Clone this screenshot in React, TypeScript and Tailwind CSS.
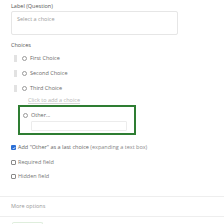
import React from 'react';

const Radio: React.FC = () => (
  <span className="w-[5px] h-[5px] rounded-full border-[0.5px] border-[#9a9a9a] bg-white shrink-0" />
);

const Box: React.FC<{ checked?: boolean }> = ({ checked }) =>
  checked ? (
    <span className="w-[5px] h-[5px] rounded-[1px] bg-[#2b6fd6] flex items-center justify-center shrink-0">
      <svg viewBox="0 0 10 10" className="w-[4px] h-[4px]">
        <path d="M2 5.2 L4.2 7.4 L8 2.8" stroke="white" strokeWidth="1.8" fill="none" />
      </svg>
    </span>
  ) : (
    <span className="w-[5px] h-[5px] rounded-[1px] border-[0.5px] border-[#8a8a8a] bg-white shrink-0" />
  );

const choices = ['First Choice', 'Second Choice', 'Third Choice'];

export default function App() {
  return (
    <div
      className="w-[224px] h-[224px] overflow-hidden bg-white text-[5.5px] text-[#555]"
      style={{ fontFamily: '"Open Sans", "Liberation Sans", sans-serif' }}
    >
      <div className="px-[11px] pt-[3px]">
        <div className="h-[6px] leading-[6px] text-[#555]">Label (Question)</div>
        <div className="mt-[2px] w-[167px] h-[24px] rounded-[2px] border border-[#e6e6e6] px-[5px] pt-[3px] text-[#9a9a9a]">
          Select a choice
        </div>

        <div className="mt-[7px] h-[6px] leading-[6px] text-[#555]">Choices</div>

        <div className="mt-[3px] flex flex-col">
          {choices.map((c) => (
            <div key={c} className="h-[15px] flex items-center pl-[3px]">
              <span className="w-[3px] h-[7px] bg-[#e2e2e2] mr-[5px]" />
              <Radio />
              <span className="ml-[3px] text-[#6a6a6a]">{c}</span>
            </div>
          ))}
        </div>

        <div className="ml-[17px] h-[9px] leading-[9px] text-[#b5b5b5] underline decoration-[#d5d5d5]">
          Click to add a choice
        </div>

        <div className="ml-[7px] w-[118px] h-[30px] border-2 border-[#2e7d32] pl-[3px] pr-[7px] pt-[5px]">
          <div className="flex items-center h-[6px]">
            <Radio />
            <span className="ml-[3px] text-[#666]">Other...</span>
          </div>
          <div className="ml-[8px] mt-[3px] h-[10px] border border-[#ececec] rounded-[1px]" />
        </div>

        <div className="mt-[5px] flex flex-col">
          <div className="h-[15px] flex items-center">
            <Box checked />
            <span className="ml-[2px] text-[#666]">
              Add "Other" as a last choice <span className="text-[#888]">(expanding a text box)</span>
            </span>
          </div>
          <div className="h-[14px] flex items-center">
            <Box />
            <span className="ml-[2px] text-[#777]">Required field</span>
          </div>
          <div className="h-[15px] flex items-center">
            <Box />
            <span className="ml-[2px] text-[#777]">Hidden field</span>
          </div>
        </div>
      </div>

      <div className="mt-[12px] border-t border-[#eeeeee]" />
      <div className="h-[19px] flex items-center px-[11px] text-[#999]">More options</div>
      <div className="border-t border-[#eeeeee]" />
      <div className="px-[12px] pt-[5px]">
        <div className="w-[31px] h-[8px] border-t border-x border-[#dfeedd] rounded-t-[2px]" />
      </div>
    </div>
  );
}
